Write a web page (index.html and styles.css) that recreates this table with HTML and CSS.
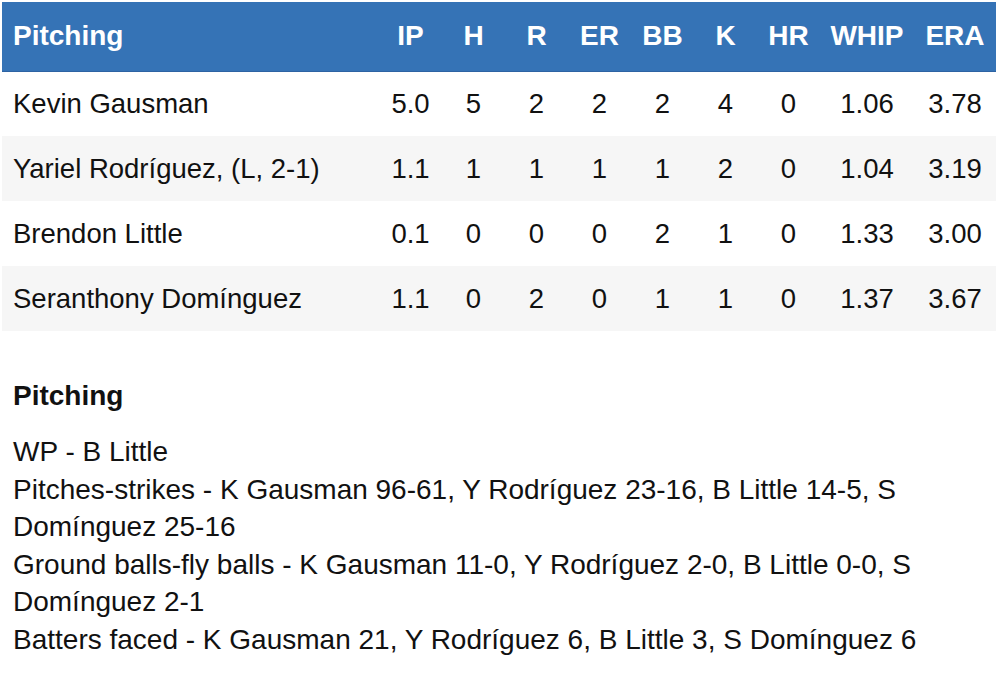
FILE: index.html
```html
<!DOCTYPE html>
<html lang="en">
<head>
<meta charset="utf-8">
<title>Pitching</title>
<link rel="stylesheet" href="styles.css">
</head>
<body>
<div class="page">
  <table class="box">
    <colgroup>
      <col class="c-name">
      <col class="c-s"><col class="c-s"><col class="c-s"><col class="c-s"><col class="c-s"><col class="c-s">
      <col class="c-hr"><col class="c-whip"><col class="c-era">
    </colgroup>
    <thead>
      <tr>
        <th class="name">Pitching</th>
        <th>IP</th><th>H</th><th>R</th><th>ER</th><th>BB</th><th>K</th><th>HR</th><th>WHIP</th><th>ERA</th>
      </tr>
    </thead>
    <tbody>
      <tr>
        <td class="name">Kevin Gausman</td>
        <td>5.0</td><td>5</td><td>2</td><td>2</td><td>2</td><td>4</td><td>0</td><td>1.06</td><td>3.78</td>
      </tr>
      <tr>
        <td class="name">Yariel Rodríguez, (L, 2-1)</td>
        <td>1.1</td><td>1</td><td>1</td><td>1</td><td>1</td><td>2</td><td>0</td><td>1.04</td><td>3.19</td>
      </tr>
      <tr>
        <td class="name">Brendon Little</td>
        <td>0.1</td><td>0</td><td>0</td><td>0</td><td>2</td><td>1</td><td>0</td><td>1.33</td><td>3.00</td>
      </tr>
      <tr>
        <td class="name">Seranthony Domínguez</td>
        <td>1.1</td><td>0</td><td>2</td><td>0</td><td>1</td><td>1</td><td>0</td><td>1.37</td><td>3.67</td>
      </tr>
    </tbody>
  </table>

  <section class="notes">
    <h2 class="notes-title">Pitching</h2>
    <p class="note">WP - B Little</p>
    <p class="note">Pitches-strikes - K Gausman 96-61, Y Rodríguez 23-16, B Little 14-5, S Domínguez 25-16</p>
    <p class="note">Ground balls-fly balls - K Gausman 11-0, Y Rodríguez 2-0, B Little 0-0, S Domínguez 2-1</p>
    <p class="note">Batters faced - K Gausman 21, Y Rodríguez 6, B Little 3, S Domínguez 6</p>
  </section>
</div>
</body>
</html>
```

FILE: styles.css
```css
html, body {
  margin: 0;
  padding: 0;
  background: #ffffff;
}

body {
  font-family: "Liberation Sans", Arial, Helvetica, sans-serif;
  font-size: 27.5px;
  color: #111111;
}

.page {
  padding: 2px 4px 0 2px;
}

.box {
  width: 994px;
  border-collapse: collapse;
  table-layout: fixed;
}

.c-name { width: 377px; }
.c-s { width: 63px; }
.c-hr { width: 63px; }
.c-whip { width: 94px; }
.c-era { width: 82px; }

.box th,
.box td {
  padding: 0;
  text-align: center;
  white-space: nowrap;
  line-height: 32px;
}

.box thead tr {
  background: #3573b6;
  height: 69px;
}

.box th {
  color: #ffffff;
  font-weight: bold;
  font-size: 28px;
  border-bottom: 1px solid #2d63a3;
}

.box tbody tr {
  height: 65px;
  background: #ffffff;
}

.box tbody tr:nth-child(even) {
  background: #f6f6f6;
}

.box .name {
  text-align: left;
  padding-left: 11px;
}

.notes {
  padding: 0 15px 0 11px;
  font-size: 28px;
}

.notes-title {
  margin: 48px 0 0 0;
  font-size: 28px;
  font-weight: bold;
  line-height: 33px;
  color: #111111;
}

.notes-title + .note {
  margin-top: 21px;
}

.note {
  margin: 0;
  line-height: 37.6px;
}
```
